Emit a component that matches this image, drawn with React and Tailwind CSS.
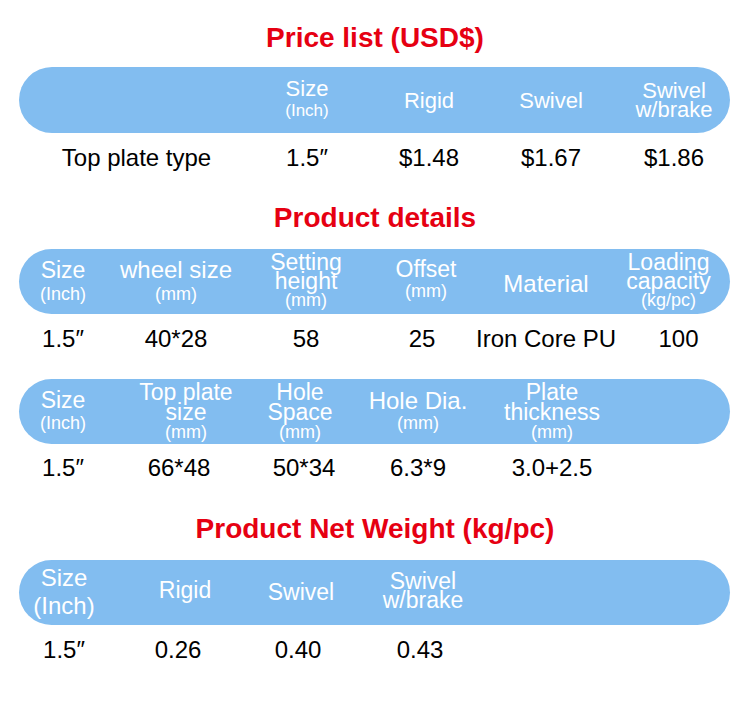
import React from "react";

const FONT = { fontFamily: '"Liberation Sans", Arial, sans-serif' };

// header cell: each line is [text, size class]
function Head({ lines, lead = "leading-[23px]", className = "" }) {
  return (
    <div className={"flex flex-col items-center justify-center whitespace-nowrap text-white " + lead + " " + className}>
      {lines.map(([t, cls], i) => (
        <span key={i} className={cls}>
          {t}
        </span>
      ))}
    </div>
  );
}

function Data({ children, className = "" }) {
  return <div className={"flex items-center justify-center whitespace-nowrap text-[24px] text-black " + className}>{children}</div>;
}

function Title({ children, className = "" }) {
  return <h2 className={"text-center text-[28px] font-bold leading-[32px] text-[#e60012] " + className}>{children}</h2>;
}

const BAR = "ml-[19px] w-[711px] rounded-full bg-[#82bdf0] grid";

export default function App() {
  return (
    <div className="w-[750px] h-[708px] bg-white overflow-hidden" style={FONT}>
      <Title className="pt-[22px]">Price list (USD$)</Title>

      {/* price list */}
      <div className={BAR + " mt-[13px] h-[66px] grid-cols-[227px_122px_122px_122px_118px]"}>
        <div />
        <Head lines={[["Size", "text-[22px]"], ["(Inch)", "text-[17px]"]]} lead="leading-[22px]" />
        <Head lines={[["Rigid", "text-[22px]"]]} />
        <Head lines={[["Swivel", "text-[22px]"]]} />
        <Head lines={[["Swivel", "text-[22px]"], ["w/brake", "text-[22px]"]]} lead="leading-[19px]" className="pl-[6px]" />
      </div>
      <div className="ml-[19px] w-[711px] h-[50px] grid grid-cols-[227px_122px_122px_122px_118px]">
        <Data className="pl-[8px]">Top plate type</Data>
        <Data>1.5″</Data>
        <Data>$1.48</Data>
        <Data>$1.67</Data>
        <Data className="pl-[6px]">$1.86</Data>
      </div>

      <Title className="mt-[19px]">Product details</Title>

      {/* product details 1 */}
      <div className={BAR + " mt-[15px] h-[65px] grid-cols-[88px_138px_122px_118px_122px_123px]"}>
        <Head lines={[["Size", "text-[23px]"], ["(Inch)", "text-[18px]"]]} lead="leading-[24px]" />
        <Head lines={[["wheel size", "text-[24px]"], ["(mm)", "text-[18px]"]]} lead="leading-[24px]" />
        <Head lines={[["Setting", "text-[23px]"], ["height", "text-[23px]"], ["(mm)", "text-[18px]"]]} lead="leading-[19px]" />
        <Head lines={[["Offset", "text-[23px]"], ["(mm)", "text-[18px]"]]} lead="leading-[22px]" className="-mt-[3px]" />
        <Head lines={[["Material", "text-[24px]"]]} className="pt-[3px]" />
        <Head lines={[["Loading", "text-[23px]"], ["capacity", "text-[23px]"], ["(kg/pc)", "text-[18px]"]]} lead="leading-[19px]" />
      </div>
      <div className="ml-[19px] w-[711px] h-[50px] grid grid-cols-[88px_138px_122px_118px_122px_123px]">
        <Data>1.5″</Data>
        <Data>40*28</Data>
        <Data>58</Data>
        <Data className="pr-[8px]">25</Data>
        <Data>Iron Core PU</Data>
        <Data className="pl-[20px]">100</Data>
      </div>

      {/* product details 2 */}
      <div className={BAR + " mt-[15px] h-[65px] grid-cols-[88px_158px_70px_166px_102px_127px]"}>
        <Head lines={[["Size", "text-[23px]"], ["(Inch)", "text-[18px]"]]} lead="leading-[23px]" />
        <Head lines={[["Top plate", "text-[23px]"], ["size", "text-[23px]"], ["(mm)", "text-[18px]"]]} lead="leading-[20px]" />
        <Head lines={[["Hole", "text-[23px]"], ["Space", "text-[23px]"], ["(mm)", "text-[18px]"]]} lead="leading-[20px]" />
        <Head lines={[["Hole Dia.", "text-[24px]"], ["(mm)", "text-[18px]"]]} lead="leading-[23px]" />
        <Head lines={[["Plate", "text-[23px]"], ["thickness", "text-[23px]"], ["(mm)", "text-[18px]"]]} lead="leading-[20px]" />
        <div />
      </div>
      <div className="ml-[19px] w-[711px] h-[48px] grid grid-cols-[88px_158px_70px_166px_102px_127px]">
        <Data>1.5″</Data>
        <Data className="pr-[14px]">66*48</Data>
        <Data className="pl-[8px]">50*34</Data>
        <Data>6.3*9</Data>
        <Data>3.0+2.5</Data>
        <div />
      </div>

      <Title className="mt-[21px]">Product Net Weight (kg/pc)</Title>

      {/* net weight */}
      <div className={BAR + " mt-[15px] h-[65px] grid-cols-[90px_152px_80px_164px_225px]"}>
        <Head lines={[["Size", "text-[24px]"], ["(Inch)", "text-[24px]"]]} lead="leading-[28px]" className="-mt-[2px]" />
        <Head lines={[["Rigid", "text-[23px]"]]} className="-mt-[4px]" />
        <Head lines={[["Swivel", "text-[23px]"]]} />
        <Head lines={[["Swivel", "text-[23px]"], ["w/brake", "text-[23px]"]]} lead="leading-[19px]" className="-mt-[3px]" />
        <div />
      </div>
      <div className="ml-[19px] w-[711px] h-[50px] grid grid-cols-[90px_152px_80px_164px_225px]">
        <Data>1.5″</Data>
        <Data className="pr-[14px]">0.26</Data>
        <Data className="pr-[6px]">0.40</Data>
        <Data className="pr-[6px]">0.43</Data>
        <div />
      </div>
    </div>
  );
}
